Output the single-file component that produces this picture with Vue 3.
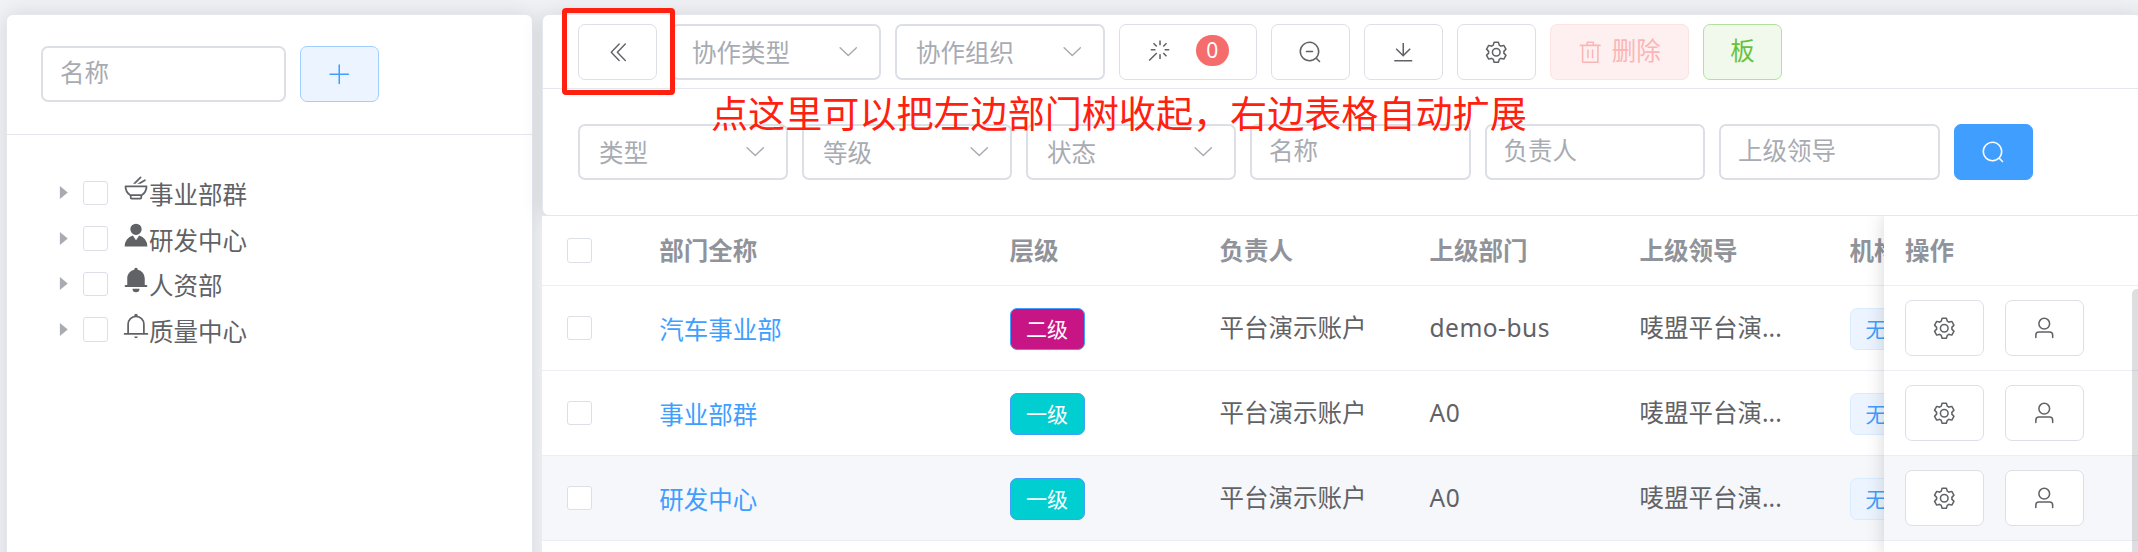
<script setup>
import { h } from 'vue'

const paths = {
  collapse: 'M529.408 149.376a29.12 29.12 0 0 1 41.728 0 30.592 30.592 0 0 1 0 42.688L259.264 511.936l311.872 319.936a30.592 30.592 0 0 1-.512 43.264 29.12 29.12 0 0 1-41.216-.512L197.76 534.272a32 32 0 0 1 0-44.672l331.648-340.224zm256 0a29.12 29.12 0 0 1 41.728 0 30.592 30.592 0 0 1 0 42.688L515.264 511.936l311.872 319.936a30.592 30.592 0 0 1-.512 43.264 29.12 29.12 0 0 1-41.216-.512L453.76 534.272a32 32 0 0 1 0-44.672l331.648-340.224z',
  down: 'M831.872 340.864 512 652.672 192.128 340.864a30.592 30.592 0 0 0-42.752 0 29.12 29.12 0 0 0 0 41.6L489.664 714.24a32 32 0 0 0 44.672 0l340.288-331.712a29.12 29.12 0 0 0 0-41.728 30.592 30.592 0 0 0-42.752 0z',
  plus: 'M480 480V128a32 32 0 0 1 64 0v352h352a32 32 0 1 1 0 64H544v352a32 32 0 1 1-64 0V544H128a32 32 0 0 1 0-64h352z',
  zoomOut: 'm795.904 750.72 124.992 124.928a32 32 0 0 1-45.248 45.248L750.656 795.904a416 416 0 1 1 45.248-45.248zM480 832a352 352 0 1 0 0-704 352 352 0 0 0 0 704zM352 448h256a32 32 0 0 1 0 64H352a32 32 0 0 1 0-64z',
  search: 'm795.904 750.72 124.992 124.928a32 32 0 0 1-45.248 45.248L750.656 795.904a416 416 0 1 1 45.248-45.248zM480 832a352 352 0 1 0 0-704 352 352 0 0 0 0 704z',
  download: 'M160 832h704a32 32 0 1 1 0 64H160a32 32 0 1 1 0-64zm384-253.696 236.288-236.352 45.248 45.248L508.8 704 192 387.2l45.248-45.248L480 584.704V128h64v450.304z',
  setting: 'M600.704 64a32 32 0 0 1 30.464 22.208l35.2 109.376c14.784 7.232 28.928 15.36 42.432 24.512l112.384-24.192a32 32 0 0 1 34.432 15.36L944.32 364.8a32 32 0 0 1-4.032 37.504l-77.12 85.12a357.12 357.12 0 0 1 0 49.024l77.12 85.248a32 32 0 0 1 4.032 37.504l-88.704 153.6a32 32 0 0 1-34.432 15.296L708.8 803.904c-13.44 9.088-27.648 17.28-42.368 24.512l-35.264 109.376A32 32 0 0 1 600.704 960H423.296a32 32 0 0 1-30.464-22.208L357.696 828.48a351.616 351.616 0 0 1-42.56-24.64l-112.32 24.256a32 32 0 0 1-34.432-15.36L79.68 659.2a32 32 0 0 1 4.032-37.504l77.12-85.248a357.12 357.12 0 0 1 0-48.896l-77.12-85.248A32 32 0 0 1 79.68 364.8l88.704-153.6a32 32 0 0 1 34.432-15.296l112.32 24.256c13.568-9.152 27.776-17.408 42.56-24.64l35.2-109.312A32 32 0 0 1 423.232 64H600.64zm-23.424 64H446.72l-36.352 113.088-24.512 11.968a294.113 294.113 0 0 0-34.816 20.096l-22.656 15.36-116.224-25.088-65.28 113.152 79.68 88.192-1.92 27.136a293.12 293.12 0 0 0 0 40.192l1.92 27.136-79.808 88.192 65.344 113.152 116.224-25.024 22.656 15.296a294.113 294.113 0 0 0 34.816 20.096l24.512 11.968L446.72 896h130.688l36.48-113.152 24.448-11.904a288.282 288.282 0 0 0 34.752-20.096l22.592-15.296 116.288 25.024 65.28-113.152-79.744-88.192 1.92-27.136a293.12 293.12 0 0 0 0-40.256l-1.92-27.136 79.808-88.128-65.344-113.152-116.288 24.96-22.592-15.232a287.616 287.616 0 0 0-34.752-20.096l-24.448-11.904L577.344 128zM512 320a192 192 0 1 1 0 384 192 192 0 0 1 0-384zm0 64a128 128 0 1 0 0 256 128 128 0 0 0 0-256z',
  user: 'M512 512a192 192 0 1 0 0-384 192 192 0 0 0 0 384zm0 64a256 256 0 1 1 0-512 256 256 0 0 1 0 512zm320 320v-96a96 96 0 0 0-96-96H288a96 96 0 0 0-96 96v96a32 32 0 1 1-64 0v-96a160 160 0 0 1 160-160h448a160 160 0 0 1 160 160v96a32 32 0 1 1-64 0z',
  trash: 'M160 256H96a32 32 0 0 1 0-64h256V95.936a32 32 0 0 1 32-32h256a32 32 0 0 1 32 32V192h256a32 32 0 1 1 0 64h-64v672a32 32 0 0 1-32 32H192a32 32 0 0 1-32-32V256zm448-64v-64H416v64h192zM224 896h576V256H224v640zm192-128a32 32 0 0 1-32-32V416a32 32 0 0 1 64 0v320a32 32 0 0 1-32 32zm192 0a32 32 0 0 1-32-32V416a32 32 0 0 1 64 0v320a32 32 0 0 1-32 32z',
  magic: 'M512 64h64v192h-64V64zm0 576h64v192h-64V640zM160 480v-64h192v64H160zm576 0v-64h192v64H736zM249.856 199.04l45.248-45.184L430.848 289.6 385.6 334.848 249.856 199.104zM657.152 606.4l45.248-45.248 135.744 135.744-45.248 45.248L657.152 606.4zM114.048 923.2 68.8 877.952l316.8-316.8 45.248 45.248-316.8 316.8zM702.4 334.848 657.152 289.6l135.744-135.744 45.248 45.248L702.4 334.848z',
  avatar: 'M628.736 528.896A416 416 0 0 1 928 928H96a415.872 415.872 0 0 1 299.264-399.104L512 704l116.736-175.104zM720 304a208 208 0 1 1-416 0 208 208 0 0 1 416 0z',
  bellFilled: 'M640 832a128 128 0 0 1-256 0h256zm192-64H134.4a38.4 38.4 0 0 1 0-76.8H192V448c0-154.88 110.08-284.16 256.32-313.6a64 64 0 1 1 127.36 0A320.128 320.128 0 0 1 832 448v243.2h57.6a38.4 38.4 0 0 1 0 76.8H832z',
  bell: 'M512 64a64 64 0 0 1 64 64v64H448v-64a64 64 0 0 1 64-64zM256 768h512V448a256 256 0 1 0-512 0v320zm256-640a320 320 0 0 1 320 320v384H192V448a320 320 0 0 1 320-320zM96 768h832q32 0 32 32t-32 32H96q-32 0-32-32t32-32zm352 128h128a64 64 0 0 1-128 0z',
  bowl: 'M714.432 704a351.744 351.744 0 0 0 148.16-256H161.408a351.744 351.744 0 0 0 148.16 256h404.864zM288 766.592A415.68 415.68 0 0 1 96 416a32 32 0 0 1 32-32h768a32 32 0 0 1 32 32 415.68 415.68 0 0 1-192 350.592V832a64 64 0 0 1-64 64H352a64 64 0 0 1-64-64v-65.408zM493.248 320h-90.496l254.4-254.4a32 32 0 1 1 45.248 45.248L493.248 320zm187.328 0h-128l269.696-155.712a32 32 0 0 1 32 55.424L680.576 320zM352 768v64h320v-64H352z',
  caret: 'M384 192v640l384-320.064z',
}

const Icon = (props) =>
  h('svg', { viewBox: '0 0 1024 1024', fill: 'currentColor' }, [h('path', { d: paths[props.name] })])
Icon.props = ['name']

const tree = [
  { icon: 'bowl', label: '事业部群' },
  { icon: 'avatar', label: '研发中心' },
  { icon: 'bellFilled', label: '人资部' },
  { icon: 'bell', label: '质量中心' },
]
const topSelects = ['协作类型', '协作组织']
const filterSelects = ['类型', '等级', '状态']
const filterInputs = ['名称', '负责人', '上级领导']
const headers = ['部门全称', '层级', '负责人', '上级部门', '上级领导', '机构']
const rows = [
  { name: '汽车事业部', level: '二级', tone: 'magenta', parent: 'demo-bus' },
  { name: '事业部群', level: '一级', tone: 'cyan', parent: 'A0' },
  { name: '研发中心', level: '一级', tone: 'cyan', parent: 'A0', hover: true },
]
</script>

<template>
  <div class="page">
    <aside class="card side">
      <div class="side-head">
        <div class="field side-input"><span>名称</span></div>
        <button class="btn btn-add"><Icon class="icon" name="plus" /></button>
      </div>
      <ul class="tree">
        <li v-for="n in tree" :key="n.label">
          <Icon class="caret" name="caret" />
          <i class="check"></i>
          <Icon class="node-icon" :name="n.icon" />
          <span>{{ n.label }}</span>
        </li>
      </ul>
    </aside>

    <main class="main">
      <section class="card panel">
        <div class="toolbar">
          <button class="btn btn-collapse"><Icon class="icon" name="collapse" /></button>
          <div v-for="s in topSelects" :key="s" class="field select">
            <span>{{ s }}</span><Icon class="icon" name="down" />
          </div>
          <button class="btn btn-count">
            <Icon class="icon" name="magic" /><em class="count">0</em>
          </button>
          <button class="btn"><Icon class="icon" name="zoomOut" /></button>
          <button class="btn"><Icon class="icon" name="download" /></button>
          <button class="btn"><Icon class="icon" name="setting" /></button>
          <button class="btn btn-delete"><Icon class="icon" name="trash" /><span>删除</span></button>
          <button class="btn btn-board"><span>板</span></button>
        </div>
        <div class="filters">
          <div v-for="s in filterSelects" :key="s" class="field select">
            <span>{{ s }}</span><Icon class="icon" name="down" />
          </div>
          <div v-for="s in filterInputs" :key="s" class="field filter-input"><span>{{ s }}</span></div>
          <button class="btn btn-search"><Icon class="icon" name="search" /></button>
        </div>
      </section>

      <section class="table">
        <div class="data">
          <div class="row head">
            <div class="cell pick"><i class="check"></i></div>
            <div v-for="t in headers" :key="t" class="cell">{{ t }}</div>
          </div>
          <div v-for="r in rows" :key="r.name" class="row" :class="{ hover: r.hover }">
            <div class="cell pick"><i class="check"></i></div>
            <div class="cell link">{{ r.name }}</div>
            <div class="cell"><span class="tag" :class="r.tone">{{ r.level }}</span></div>
            <div class="cell">平台演示账户</div>
            <div class="cell latin">{{ r.parent }}</div>
            <div class="cell">唛盟平台演...</div>
            <div class="cell"><span class="tag plain">无</span></div>
          </div>
          <div class="row"></div>
        </div>
        <div class="fixed">
          <div class="row head"><div class="cell">操作</div></div>
          <div v-for="r in rows" :key="r.name" class="row actions" :class="{ hover: r.hover }">
            <button class="btn"><Icon class="icon" name="setting" /></button>
            <button class="btn"><Icon class="icon" name="user" /></button>
          </div>
          <div class="row"></div>
        </div>
        <div class="scrollbar"></div>
      </section>
    </main>

    <div class="marker"></div>
    <p class="note">点这里可以把左边部门树收起，右边表格自动扩展</p>
  </div>
</template>

<style>
body {
  margin: 0;
  overflow: hidden;
}
</style>

<style scoped>
.page {
  position: relative;
  display: flex;
  gap: 9px;
  box-sizing: border-box;
  width: 2138px;
  height: 552px;
  padding: 14px 0 0 6px;
  overflow: hidden;
  background: #f0f2f5;
  color: #606266;
  font-family: "Noto Sans", "Noto Sans CJK SC", sans-serif;
  font-size: 24.5px;
  line-height: 36px;
}
.page * {
  box-sizing: border-box;
}
.card {
  border: 1px solid #e4e7ed;
  border-radius: 7px;
  background: #fff;
  box-shadow: 0 0 21px rgba(0, 0, 0, 0.12);
}
.side {
  flex: none;
  width: 527px;
  height: 600px;
}
.side-head {
  display: flex;
  gap: 14px;
  height: 120px;
  padding: 31px 34px;
  border-bottom: 1px solid #e4e7ed;
}
.field {
  display: flex;
  flex: none;
  align-items: center;
  height: 56px;
  padding: 0 17px;
  border: 2px solid #dcdfe6;
  border-radius: 7px;
  background: #fff;
  color: #a8abb2;
  white-space: nowrap;
}
.field span {
  margin-top: -2px;
}
.side-input {
  width: 245px;
}
.select {
  justify-content: space-between;
  width: 210px;
  padding: 0 19px;
}
.select span {
  margin-top: 2px;
}
.select .icon {
  margin-top: -2px;
}
.filter-input {
  width: 220.5px;
}
.icon {
  flex: none;
  width: 24.5px;
  height: 24.5px;
}
.btn {
  display: flex;
  flex: none;
  align-items: center;
  justify-content: center;
  width: 79px;
  height: 56px;
  padding: 0;
  border: 1px solid #dcdfe6;
  border-radius: 7px;
  background: #fff;
  color: #606266;
  font: inherit;
}
.btn span {
  margin-top: -3px;
}
.btn-collapse {
  padding-left: 2px;
}
.btn-add {
  border-color: #a0cfff;
  background: #ecf5ff;
  color: #409eff;
}
.btn-count {
  gap: 24px;
  width: 138px;
}
.btn-count .icon {
  margin-top: -1px;
}
.count {
  width: 33px;
  height: 31px;
  margin-top: -4px;
  border-radius: 16px;
  background: #f56c6c;
  color: #fff;
  font-size: 21px;
  font-style: normal;
  line-height: 31px;
  text-align: center;
}
.btn-delete {
  gap: 9px;
  width: 139px;
  border-color: #fde2e2;
  background: #fef0f0;
  color: #fab6b6;
}
.btn-board {
  border-color: #b3e19d;
  background: #f0f9eb;
  color: #67c23a;
}
.btn-search {
  border-color: #409eff;
  background: #409eff;
  color: #fff;
}
.check {
  flex: none;
  width: 24.5px;
  height: 24.5px;
  border: 1px solid #dcdfe6;
  border-radius: 3px;
  background: #fff;
}
.tree {
  margin: 0;
  padding: 35px 0 0 45px;
  list-style: none;
}
.tree li {
  display: flex;
  align-items: center;
  height: 45.5px;
}
.caret {
  width: 21px;
  height: 21px;
  margin-right: 10px;
  color: #a8abb2;
}
.node-icon {
  width: 28px;
  height: 28px;
  margin: -7px 0 0 14px;
}
.tree span {
  margin-top: 5px;
  margin-left: -0.5px;
}
.main {
  flex: none;
  width: 1596px;
}
.panel {
  width: 1600px;
  height: 202px;
}
.toolbar,
.filters {
  display: flex;
  gap: 14px;
  padding-left: 35px;
}
.toolbar {
  height: 74px;
  padding-top: 9px;
  border-bottom: 1px solid #e4e7ed;
}
.filters {
  padding-top: 35px;
}
.table {
  position: relative;
  display: flex;
  height: 340px;
  overflow: hidden;
  background: #fff;
}
.data {
  flex: none;
  width: 1342px;
  overflow: hidden;
}
.row {
  display: grid;
  grid-template-columns: 96.25px 350.25px repeat(4, 210px) 120px;
  align-items: center;
  height: 85px;
  border-bottom: 1px solid #ebeef5;
}
.head {
  height: 70px;
  color: #909399;
  font-weight: 700;
}
.head .cell:not(.pick) {
  padding-top: 1px;
}
.hover {
  background: #f5f7fa;
}
.cell {
  padding-left: 21px;
  white-space: nowrap;
}
.pick {
  display: flex;
  padding-left: 25px;
}
.link {
  padding-top: 4px;
  color: #409eff;
}
.latin {
  letter-spacing: 0.5px;
}
.tag {
  display: flex;
  align-items: center;
  justify-content: center;
  width: 75px;
  height: 42px;
  margin-top: 2px;
  border: 1px solid #409eff;
  border-radius: 7px;
  color: #fff;
  font-size: 21px;
  line-height: 30px;
}
.magenta {
  background: #c71585;
}
.cyan {
  background: #00ced1;
}
.plain {
  justify-content: flex-start;
  padding-left: 15px;
  border-color: #d9ecff;
  background: #ecf5ff;
  color: #409eff;
}
.fixed {
  position: relative;
  flex: none;
  width: 254px;
  background: #fff;
  box-shadow: 0 0 18px rgba(0, 0, 0, 0.16);
}
.fixed .row {
  display: flex;
}
.actions {
  gap: 21px;
  padding-left: 21px;
}
.scrollbar {
  position: absolute;
  top: 73px;
  right: -4px;
  width: 10px;
  height: 300px;
  border-radius: 5px;
  background: rgba(144, 147, 153, 0.3);
}
.marker {
  position: absolute;
  top: 8px;
  left: 562px;
  width: 113px;
  height: 87px;
  border: 5px solid #ff2010;
  border-radius: 4px;
}
.note {
  position: absolute;
  top: 89px;
  left: 711px;
  margin: 0;
  color: #ff2010;
  font-size: 37.1px;
  line-height: 50px;
  white-space: nowrap;
}
</style>
